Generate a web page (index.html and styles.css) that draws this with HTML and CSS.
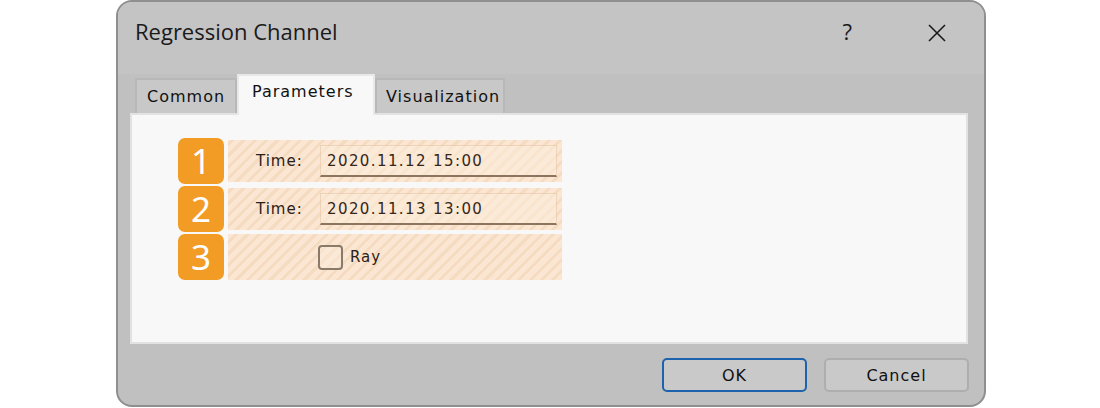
FILE: index.html
```html
<!DOCTYPE html>
<html lang="en">
<head>
    <meta charset="UTF-8">
    <title>Regression Channel</title>
    <link rel="stylesheet" href="styles.css">
</head>
<body>
    <div class="dialog">
        <div class="titlebar">
            <h1 class="title">Regression Channel</h1>
            <span class="help">?</span>
            <svg class="close" width="18" height="18" viewBox="0 0 18 18">
                <path d="M1 1 L17 17 M17 1 L1 17" stroke="#1a1a1a" stroke-width="1.6" fill="none"/>
            </svg>
        </div>

        <div class="tabs">
            <div class="tab">Common</div>
            <div class="tab active">Parameters</div>
            <div class="tab">Visualization</div>
        </div>

        <div class="panel">
            <div class="row">
                <div class="badge">1</div>
                <div class="box">
                    <span class="label">Time:</span>
                    <div class="field">2020.11.12 15:00</div>
                </div>
            </div>
            <div class="row">
                <div class="badge">2</div>
                <div class="box">
                    <span class="label">Time:</span>
                    <div class="field">2020.11.13 13:00</div>
                </div>
            </div>
            <div class="row">
                <div class="badge">3</div>
                <div class="box box-full">
                    <span class="check"></span>
                    <span class="check-label">Ray</span>
                </div>
            </div>
        </div>

        <div class="buttons">
            <button class="btn btn-ok">OK</button>
            <button class="btn">Cancel</button>
        </div>
    </div>
</body>
</html>
```

FILE: styles.css
```css
* {
    margin: 0;
    padding: 0;
    box-sizing: border-box;
}

body {
    background: #fff;
    font-family: "DejaVu Sans", sans-serif;
    color: #111;
}

.dialog {
    margin-left: 116px;
    width: 870px;
    height: 407px;
    background: #c0c0c0;
    border: 2px solid #8f8f8f;
    border-radius: 16px;
    display: flex;
    flex-direction: column;
}

.titlebar {
    height: 72px;
    display: flex;
    align-items: flex-start;
    padding: 13px 0 0 17px;
    background: #c4c4c5;
    border-radius: 14px 14px 0 0;
}

.title {
    font-family: "Open Sans", sans-serif;
    font-weight: 400;
    font-size: 22px;
    line-height: 32px;
    color: #1a1a1a;
}

.help {
    margin-left: auto;
    font-family: "Open Sans", sans-serif;
    font-size: 22px;
    line-height: 32px;
    color: #1a1a1a;
}

.close {
    margin: 9px 38px 0 76px;
}

.tabs {
    display: flex;
    align-items: flex-end;
    height: 39px;
    padding-left: 17px;
    position: relative;
    z-index: 1;
}

.tab {
    height: 35px;
    padding: 0 10px;
    background: #c8c8c8;
    border: 2px solid #b8b8b8;
    border-bottom: none;
    font-size: 16px;
    letter-spacing: 1px;
    line-height: 34px;
    width: 102px;
}

.tab + .tab.active + .tab {
    width: 130px;
    padding-left: 9px;
}

.tab.active {
    width: 138px;
    height: 41px;
    margin-bottom: -2px;
    background: #f8f8f8;
    border: 2px solid #e8e8e8;
    border-bottom: none;
    padding: 0 13px;
    line-height: 32px;
}

.panel {
    margin-left: 12px;
    width: 838px;
    height: 231px;
    background: #f8f8f8;
    border: 2px solid #e2e2e2;
    padding: 23px 0 0 46px;
    display: flex;
    flex-direction: column;
    gap: 2px;
}

.row {
    display: flex;
    align-items: center;
    gap: 4px;
}

.badge {
    width: 46px;
    height: 46px;
    border-radius: 7px;
    background: #f29b25;
    color: #fff;
    font-family: "Noto Sans", sans-serif;
    font-size: 35px;
    line-height: 46px;
    text-align: center;
}

.box {
    width: 334px;
    height: 42px;
    display: flex;
    align-items: center;
    padding-left: 28px;
    background: repeating-linear-gradient(-45deg, #fae6d2 0 5px, #f5dbbf 5px 8px);
}

.box-full {
    height: 46px;
    padding-left: 90px;
}

.label {
    width: 64px;
    font-size: 15px;
    letter-spacing: 1px;
    color: #2a2118;
}

.field {
    width: 237px;
    height: 32px;
    padding-left: 6px;
    border: 1px solid rgba(200, 160, 120, 0.3);
    border-bottom: 2px solid #8c755f;
    background: rgba(253, 238, 222, 0.5);
    font-size: 15px;
    letter-spacing: 1.4px;
    line-height: 30px;
    color: #35271a;
}

.check {
    width: 25px;
    height: 25px;
    border: 2px solid #8a7a6a;
    border-radius: 4px;
    background: rgba(253, 238, 222, 0.4);
}

.check-label {
    margin-left: 7px;
    font-size: 15px;
    letter-spacing: 1px;
    color: #2a2118;
}

.buttons {
    display: flex;
    justify-content: flex-end;
    gap: 17px;
    padding: 14px 15px 0 0;
}

.btn {
    width: 145px;
    height: 34px;
    background: #c9c9c9;
    border: 2px solid #aeaeae;
    border-radius: 5px;
    font-family: "DejaVu Sans", sans-serif;
    font-size: 16px;
    letter-spacing: 1px;
    color: #111;
}

.btn-ok {
    border-color: #1d62ad;
}
```
